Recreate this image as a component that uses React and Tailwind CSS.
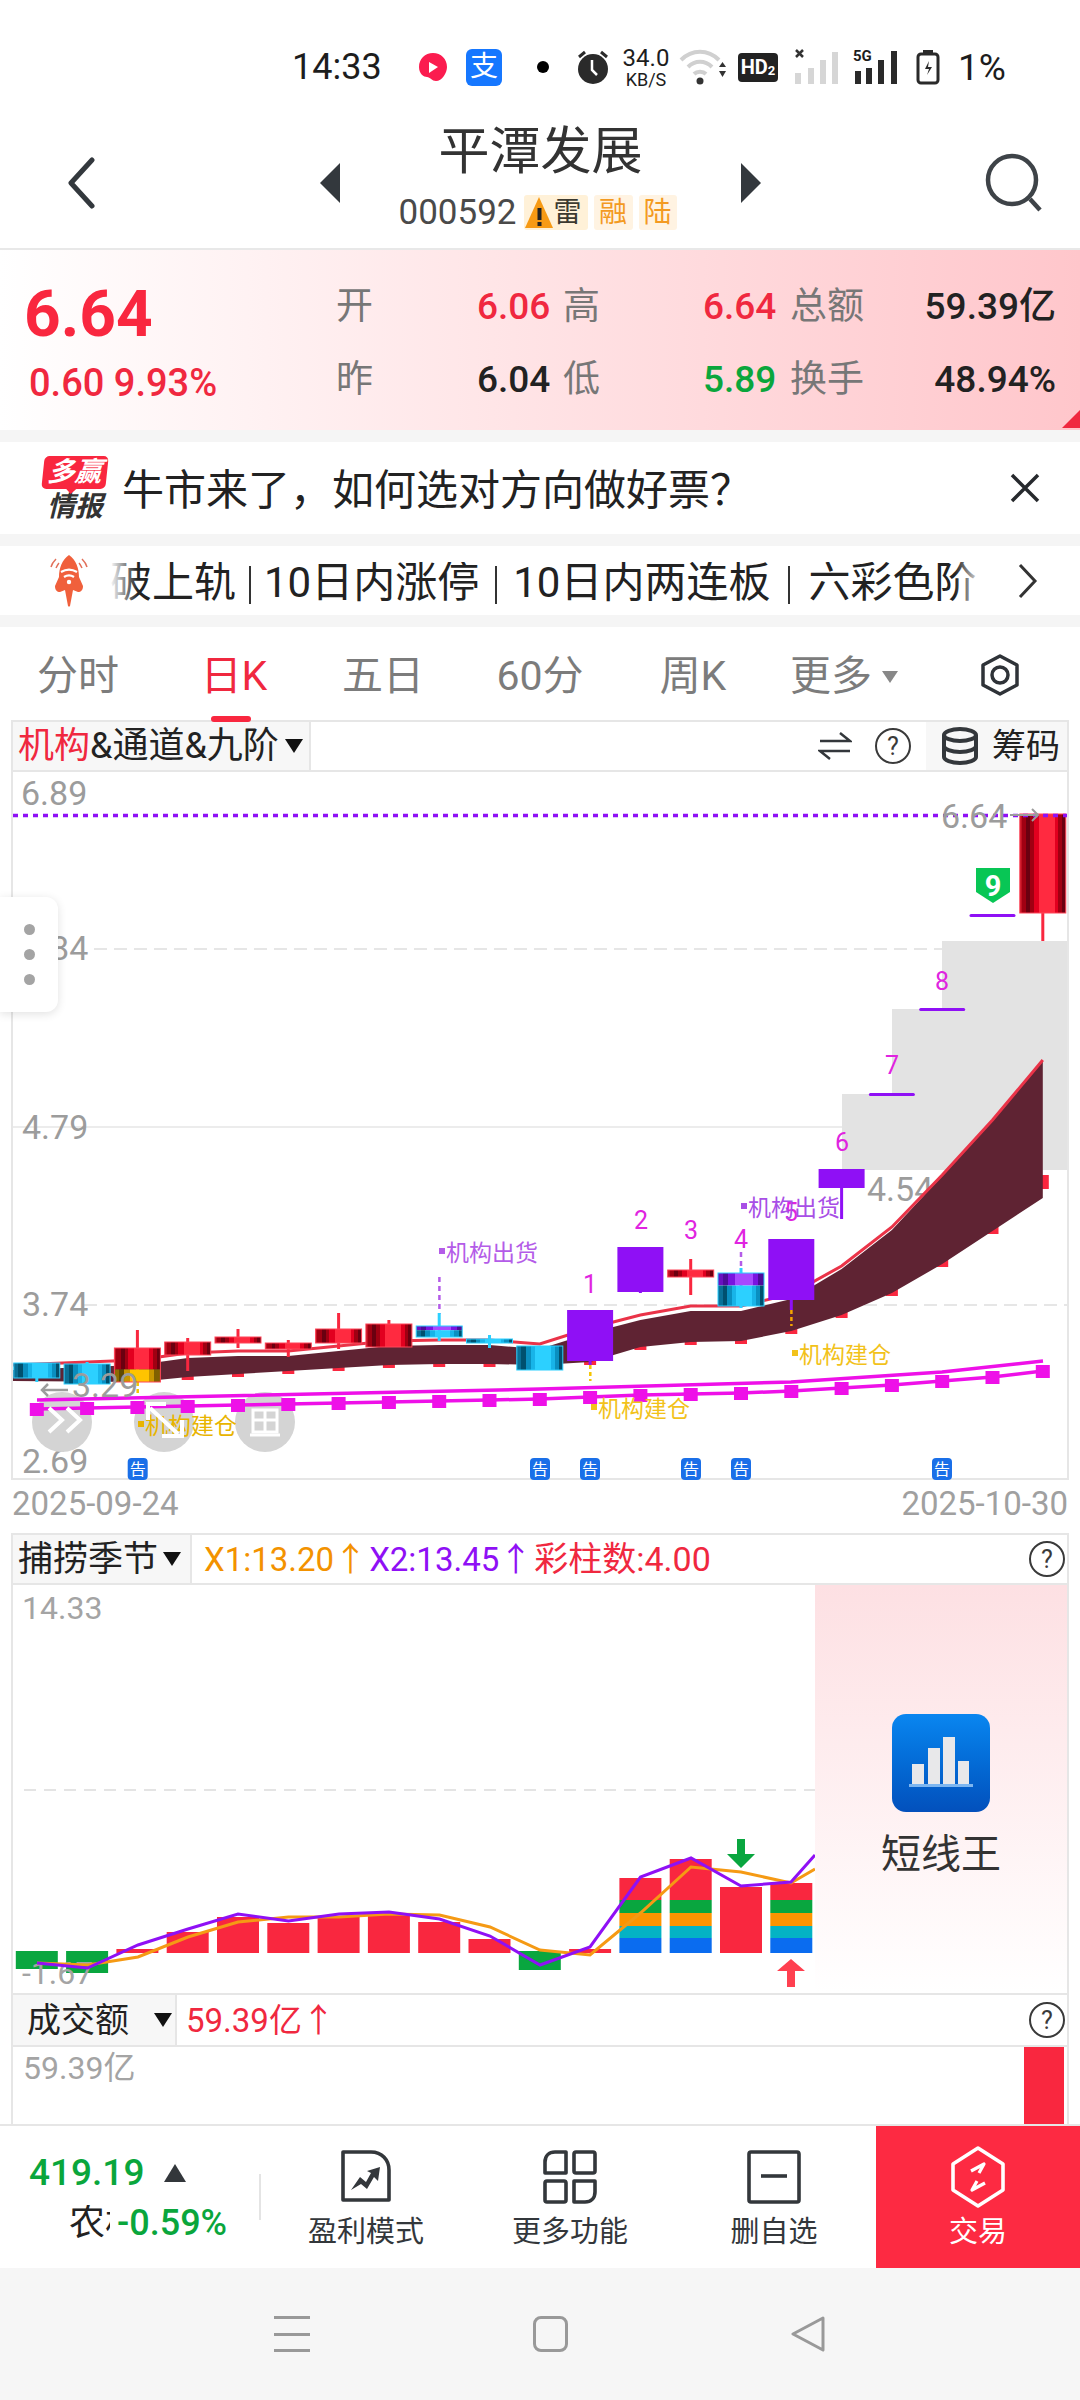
import React from 'react';

const RED = '#f9273f';
const PURPLE = '#8f10f5';
const MAGENTA = '#ee10e8';

const cx = (i) => 36.8 + 50.3 * i;

// [i, top, bottom, wickTop, wickBottom, kind]
const candles = [
  [0, 1363, 1378, 1363, 1382, 'cyan'],
  [1, 1364, 1384, 1362, 1384, 'cyan'],
  [2, 1348, 1382, 1330, 1382, 'redYellow'],
  [3, 1342, 1355, 1338, 1371, 'red'],
  [4, 1337, 1343, 1329, 1348, 'red'],
  [5, 1343, 1349, 1340, 1357, 'red'],
  [6, 1329, 1343, 1313, 1349, 'red'],
  [7, 1324, 1347, 1320, 1347, 'red'],
  [8, 1326, 1337, 1313, 1341, 'cyanPurple'],
  [9, 1339, 1343, 1335, 1348, 'cyan'],
  [10, 1346, 1370, 1346, 1370, 'cyan'],
  [11, 1310, 1361, 1310, 1365, 'purple'],
  [12, 1247, 1292, 1247, 1293, 'purple'],
  [13, 1270, 1277, 1259, 1295, 'red'],
  [14, 1273, 1306, 1268, 1308, 'cyanPurple'],
  [15, 1239, 1300, 1239, 1310, 'purple'],
  [16, 1169, 1188, 1169, 1219, 'purple'],
  [20, 814, 913, 814, 941, 'red'],
];

const bandTop = [[12, 1370], [cx(2), 1365], [cx(3), 1358], [cx(4), 1356], [cx(5), 1356], [cx(6), 1351], [cx(7), 1346], [cx(8), 1345], [cx(9), 1345], [cx(10), 1349], [cx(11), 1333], [cx(12), 1320], [cx(13), 1311], [cx(14), 1311], [cx(15), 1299], [cx(16), 1269], [cx(17), 1230], [cx(18), 1176], [cx(19), 1121], [cx(20), 1061]];
const bandBottom = [[12, 1381], [cx(2), 1382], [cx(3), 1377], [cx(4), 1374], [cx(5), 1371], [cx(6), 1368], [cx(7), 1365], [cx(8), 1364], [cx(9), 1364], [cx(10), 1365], [cx(11), 1362], [cx(12), 1347], [cx(13), 1342], [cx(14), 1341], [cx(15), 1331], [cx(16), 1315], [cx(17), 1293], [cx(18), 1264], [cx(19), 1231], [cx(20), 1198]];
const squares = [1409, 1408, 1407, 1406, 1405, 1404, 1403, 1402, 1401, 1400, 1399, 1397, 1395, 1394, 1393, 1391, 1388, 1385, 1381, 1377, 1371];

const pts = (list, dy = 0) => list.map(([x, y]) => `${x},${y + dy}`).join(' ');
// the red edge sits off the band on the left and merges with it towards the last bars
const edge = bandTop.map(([x, y], n) => `${x},${y - (n < 15 ? 5 : n < 17 ? 3 : 1)}`).join(' ');

const stripes = {
  red: [['#c01020', 0], ['#a00012', 0.04], ['#6a0010', 0.14], ['#a00012', 0.22], ['#e2001f', 0.3], ['#ff2a40', 0.42], ['#ff2a40', 0.68], ['#e2001f', 0.76], ['#a00012', 0.84], ['#6a0010', 0.92]],
  cyan: [['#0a6f96', 0], ['#00506e', 0.1], ['#0a8fc0', 0.2], ['#18b4e8', 0.3], ['#2cd0ff', 0.4], ['#2cd0ff', 0.66], ['#18b4e8', 0.74], ['#0a8fc0', 0.82], ['#00506e', 0.92]],
  yellow: [['#8c6a00', 0], ['#5f4a00', 0.1], ['#c89600', 0.2], ['#ffc400', 0.34], ['#ffc400', 0.68], ['#c89600', 0.76], ['#806000', 0.86]],
  violet: [['#6a10c0', 0], ['#4e0a9a', 0.1], ['#7a14e0', 0.22], ['#a848ff', 0.36], ['#a848ff', 0.66], ['#7a14e0', 0.76], ['#4e0a9a', 0.88]],
};

const Stripe = ({ id, stops }) => (
  <linearGradient id={id} x1="0" x2="1" y1="0" y2="0">
    {stops.map(([c, o], n) => {
      const next = stops[n + 1] ? stops[n + 1][1] : 1;
      return (
        <React.Fragment key={n}>
          <stop offset={o} stopColor={c} />
          <stop offset={next} stopColor={c} />
        </React.Fragment>
      );
    })}
  </linearGradient>
);

const Candle = ({ c }) => {
  const [i, top, bot, hi, lo, kind] = c;
  const x = cx(i);
  const left = x - 23;
  const w = 46;
  const h = bot - top;
  const wick = kind === 'red' || kind === 'redYellow' ? RED : kind === 'purple' ? PURPLE : '#2cd0ff';
  return (
    <g>
      <rect x={x - 1.5} y={hi} width="3" height={lo - hi} fill={wick} />
      {kind === 'purple' && <rect x={left} y={top} width={w} height={h} fill={PURPLE} />}
      {kind === 'red' && <rect x={left} y={top} width={w} height={h} fill="url(#sRed)" stroke="#ff4458" strokeWidth="1" />}
      {kind === 'cyan' && <rect x={left} y={top} width={w} height={h} fill="url(#sCyan)" stroke="#2cd0ff" strokeWidth="1" />}
      {kind === 'redYellow' && (
        <>
          <rect x={left} y={top} width={w} height={h * 0.63} fill="url(#sRed)" />
          <rect x={left} y={top + h * 0.63} width={w} height={h * 0.37} fill="url(#sYellow)" />
          <rect x={left} y={top} width={w} height={h} fill="none" stroke="#ff4458" strokeWidth="1" />
        </>
      )}
      {kind === 'cyanPurple' && (
        <>
          <rect x={left} y={top} width={w} height={h * 0.38} fill="url(#sViolet)" />
          <rect x={left} y={top + h * 0.38} width={w} height={h * 0.62} fill="url(#sCyan)" />
          <rect x={left} y={top} width={w} height={h} fill="none" stroke="#2cd0ff" strokeWidth="1" />
        </>
      )}
    </g>
  );
};

const Tag = ({ x, y, color, children }) => (
  <g>
    <rect x={x} y={y - 13} width="6" height="6" fill={color} />
    <text x={x + 7} y={y} fontSize="23" fill={color}>{children}</text>
  </g>
);

const Gao = ({ x }) => (
  <g>
    <rect x={x - 10} y="1458" width="20" height="22" rx="4" fill="#1a6fe8" />
    <text x={x} y="1475" fontSize="16" fill="#fff" textAnchor="middle">告</text>
  </g>
);

const MainChart = () => (
  <svg width="1054" height="708" viewBox="13 772 1054 708" className="block">
    <defs>
      <Stripe id="sRed" stops={stripes.red} />
      <Stripe id="sCyan" stops={stripes.cyan} />
      <Stripe id="sYellow" stops={stripes.yellow} />
      <Stripe id="sViolet" stops={stripes.violet} />
    </defs>

    {/* step boxes */}
    <rect x="842" y="1094" width="226" height="76" fill="#e3e3e3" />
    <rect x="892" y="1009" width="176" height="85" fill="#e3e3e3" />
    <rect x="942" y="941" width="126" height="68" fill="#e3e3e3" />

    {/* grid */}
    <line x1="94" x2="942" y1="949" y2="949" stroke="#e6e6e6" strokeWidth="2" strokeDasharray="13 7" />
    <line x1="13" x2="842" y1="1127" y2="1127" stroke="#ececec" strokeWidth="2" />
    <line x1="84" x2="1067" y1="1305" y2="1305" stroke="#e6e6e6" strokeWidth="2" strokeDasharray="13 7" />

    <g fontSize="34" fill="#9c9c9c">
      <text x="21" y="805">6.89</text>
      <text x="22" y="960">5.84</text>
      <text x="22" y="1139">4.79</text>
      <text x="22" y="1316">3.74</text>
      <text x="22" y="1473">2.69</text>
      <text x="867" y="1201">4.54</text>
    </g>

    {/* floating buttons */}
    <circle cx="62" cy="1422" r="30" fill="#d4d4d4" />
    <circle cx="164" cy="1422" r="30" fill="#d4d4d4" />
    <circle cx="265" cy="1422" r="30" fill="#d4d4d4" />

    {/* MA squares under band */}
    {bandBottom.slice(2).map(([x, y], n) => (
      <rect key={n} x={x - 6} y={n === 17 ? 1175 : y - 11} width="12" height="14" fill={RED} />
    ))}

    <polygon points={pts(bandTop) + ' ' + pts([...bandBottom].reverse())} fill="#5f2333" />
    <polyline points={pts(bandTop.slice(0, 17), -2)} fill="none" stroke="#fff" strokeWidth="1.5" />
    <polyline points={edge} fill="none" stroke="#ea3348" strokeWidth="3" />

    {/* magenta averages */}
    <polyline points="37,1400 540,1389 791,1382 942,1372 1043,1361" fill="none" stroke={MAGENTA} strokeWidth="3.5" />
    <polyline points={squares.map((y, i) => `${cx(i)},${y}`).join(' ')} fill="none" stroke={MAGENTA} strokeWidth="3.5" />
    {squares.map((y, i) => (
      <rect key={i} x={cx(i) - 7} y={y - 6} width="14" height="13" fill={MAGENTA} />
    ))}

    {/* dashed stems */}
    <line x1="439.4" x2="439.4" y1="1277" y2="1314" stroke="#b45ce8" strokeWidth="2.5" strokeDasharray="5 4" />
    <line x1="741" x2="741" y1="1252" y2="1268" stroke="#b45ce8" strokeWidth="2.5" strokeDasharray="5 4" />
    <line x1="137.7" x2="137.7" y1="1382" y2="1396" stroke="#f5c400" strokeWidth="2.5" strokeDasharray="4 3" />
    <line x1="590.3" x2="590.3" y1="1365" y2="1381" stroke="#f5c400" strokeWidth="2.5" strokeDasharray="4 3" />
    <line x1="791.4" x2="791.4" y1="1310" y2="1326" stroke="#f5a400" strokeWidth="2.5" strokeDasharray="4 3" />

    {candles.map((c) => <Candle key={c[0]} c={c} />)}
    {[17, 18, 19].map((i, n) => (
      <rect key={i} x={cx(i) - 23} y={[1093, 1008, 914][n]} width="46" height="3" rx="1.5" fill={PURPLE} />
    ))}

    {/* sequence numbers */}
    <g fontSize="25" fill="#e024e0" textAnchor="middle">
      <text x="590" y="1293">1</text>
      <text x="641" y="1229">2</text>
      <text x="691" y="1239">3</text>
      <text x="741" y="1248">4</text>
      <text x="791" y="1221">5</text>
      <text x="842" y="1151">6</text>
      <text x="892" y="1074">7</text>
      <text x="942" y="990">8</text>
    </g>

    {/* green 9 flag */}
    <polygon points="976,868 1010,868 1010,892 993,903 976,892" fill="#08c655" />
    <text x="993" y="896" fontSize="29" fontWeight="700" fill="#fff" textAnchor="middle">9</text>

    <Tag x={439} y={1261} color="#b45ce8">机构出货</Tag>
    <Tag x={741} y={1216} color="#a84fe6">机构出货</Tag>
    <Tag x={138} y={1434} color="#e8b400">机构建仓</Tag>
    <Tag x={591} y={1417} color="#f2c21a">机构建仓</Tag>
    <Tag x={792} y={1363} color="#f2c21a">机构建仓</Tag>

    {/* float icons */}
    <polyline points="49,1408 62,1420 49,1432" fill="none" stroke="#fff" strokeWidth="4" />
    <polyline points="67,1408 80,1420 67,1432" fill="none" stroke="#fff" strokeWidth="4" />
    <g fill="none" stroke="#fff" strokeWidth="4">
      <line x1="150" y1="1408" x2="178" y2="1434" />
      <polyline points="148,1420 148,1404 166,1404" />
      <polyline points="162,1436 182,1436 182,1420" />
    </g>
    <g fill="none" stroke="#fff" strokeWidth="3">
      <rect x="253" y="1410" width="24" height="22" />
      <line x1="265" y1="1410" x2="265" y2="1432" />
      <line x1="253" y1="1420" x2="277" y2="1420" />
      <line x1="250" y1="1435" x2="280" y2="1435" />
    </g>

    {/* current price dashed */}
    <line x1="13" x2="1067" y1="815.5" y2="815.5" stroke={PURPLE} strokeWidth="3.5" strokeDasharray="5 5" />
    <g fontSize="34" fill="#9c9c9c">
      <text x="941" y="828">6.64</text>
      <text x="72" y="1397">3.29</text>
    </g>
    <polyline points="1010,815 1038,815" fill="none" stroke="#9c9c9c" strokeWidth="2" />
    <polyline points="1032,809 1038,815 1032,821" fill="none" stroke="#9c9c9c" strokeWidth="2" />
    <polyline points="68,1390 42,1390" fill="none" stroke="#9c9c9c" strokeWidth="2.5" />
    <polyline points="48,1384 42,1390 48,1396" fill="none" stroke="#9c9c9c" strokeWidth="2.5" />

    {[137.7, 540, 590, 691, 741, 942].map((x) => <Gao key={x} x={x} />)}
  </svg>
);

// [x, top, bottom]
const redBars = [[2, 1949, 1953], [3, 1932, 1953], [4, 1917, 1953], [5, 1923, 1953], [6, 1917, 1953], [7, 1913, 1953], [8, 1922, 1953], [9, 1939, 1953], [11, 1949, 1953], [14, 1887, 1953]];
const greenBars = [[0, 1951, 1969], [1, 1951, 1973], [10, 1951, 1970]];
const stacked = [[12, 1878], [13, 1859], [15, 1883]];

const SubChart = () => (
  <svg width="802" height="408" viewBox="13 1585 802 408" className="block shrink-0">
    <text x="22" y="1619" fontSize="32" fill="#a4a4a4">14.33</text>
    <line x1="24" x2="815" y1="1790" y2="1790" stroke="#e4e4e4" strokeWidth="2" strokeDasharray="12 8" />
    {redBars.map(([i, t, b]) => <rect key={i} x={cx(i) - 21} y={t} width="42" height={b - t} fill={RED} />)}
    {greenBars.map(([i, t, b]) => <rect key={i} x={cx(i) - 21} y={t} width="42" height={b - t} fill="#09a63f" />)}
    {stacked.map(([i, t]) => (
      <g key={i}>
        <rect x={cx(i) - 21} y={t} width="42" height={1900 - t} fill={RED} />
        <rect x={cx(i) - 21} y="1900" width="42" height="13" fill="#09a63f" />
        <rect x={cx(i) - 21} y="1913" width="42" height="13" fill="#fd9400" />
        <rect x={cx(i) - 21} y="1926" width="42" height="12" fill="#04b3c4" />
        <rect x={cx(i) - 21} y="1938" width="42" height="15" fill="#0a6cf0" />
      </g>
    ))}
    <text x="22" y="1984" fontSize="32" fill="#a4a4a4">-1.67</text>
    <polyline points="37,1963 87.5,1965 138,1957 188,1937 238,1922 288.5,1917 339,1917 389,1914 439.5,1915 490,1927 540,1950 590,1955 640.5,1913 691,1867 741,1872 791,1883 815,1869" fill="none" stroke="#f59a14" strokeWidth="3" />
    <polyline points="37,1963 87.5,1968 138,1945 188,1929 238,1914 288.5,1921 339,1914 389,1912 439.5,1919 490,1936 540,1965 590,1947 640.5,1877 691,1858 741,1886 791,1882 815,1855" fill="none" stroke={PURPLE} strokeWidth="3" />
    <polygon points="737,1839 745,1839 745,1854 755,1854 741,1868 727,1854 737,1854" fill="#09a63f" />
    <polygon points="787,1987 795,1987 795,1971 805,1971 791,1959 777,1971 787,1971" fill="#ff4050" />
  </svg>
);

const Help = () => (
  <svg width="38" height="38" viewBox="0 0 38 38">
    <circle cx="19" cy="19" r="17" fill="none" stroke="#3a3a3a" strokeWidth="2" />
    <text x="19" y="28" fontSize="25" fill="#3a3a3a" textAnchor="middle">?</text>
  </svg>
);

const Caret = ({ className = '' }) => (
  <svg width="20" height="16" viewBox="0 0 20 16" className={className}>
    <polygon points="1,1 19,1 10,15" fill="#111" />
  </svg>
);

const StatusBar = () => (
  <div className="h-[100px] flex items-center pl-[292px] pt-[34px] text-[#1d1d1d]">
    <span className="w-[126px] text-[36px] leading-none">14:33</span>
    <svg width="30" height="30" viewBox="0 0 30 30" className="mr-[18px]">
      <path d="M15 1C7 1 1 7 1 15c0 7 5 10 8 10 3 0 5 4 9 4 6 0 11-8 11-14C29 7 23 1 15 1z" fill="#fb1c4f" />
      <path d="M11 10l9 5-9 6z" fill="#fff" />
    </svg>
    <div className="w-[36px] h-[37px] mr-[35px] rounded-[6px] bg-[#1677ff] flex items-center justify-center text-white text-[28px] leading-none">支</div>
    <div className="w-[12px] h-[12px] mr-[27px] rounded-full bg-black" />
    <svg width="34" height="36" viewBox="0 0 34 36" className="mr-[9px]">
      <circle cx="17" cy="20" r="15" fill="#2a2a2a" />
      <path d="M3 8l6-5M31 8l-6-5" stroke="#2a2a2a" strokeWidth="3" />
      <path d="M16 11v10l5 5" stroke="#fff" strokeWidth="2.5" fill="none" />
    </svg>
    <div className="w-[54px] mr-[6px] flex flex-col items-center leading-none">
      <span className="text-[24px]">34.0</span>
      <span className="text-[18px] mt-[1px]">KB/S</span>
    </div>
    <svg width="48" height="36" viewBox="0 0 48 36" className="mr-[11px]">
      <g fill="none" stroke="#d0d0d0" strokeWidth="4">
        <path d="M2 11c11-11 27-11 38 0" />
        <path d="M9 18c7-7 17-7 24 0" />
        <path d="M15 25c3-3 9-3 12 0" />
      </g>
      <circle cx="21" cy="32" r="3.5" fill="#333" />
      <polygon points="40,18 47,18 43.5,13" fill="#333" />
      <polygon points="40,22 47,22 43.5,28" fill="#333" />
    </svg>
    <div className="w-[40px] h-[29px] mr-[15px] rounded-[4px] bg-[#222] text-white font-bold text-[20px] leading-none flex items-center justify-center">HD<span className="text-[13px] mt-[6px]">2</span></div>
    <svg width="46" height="36" viewBox="0 0 46 36" className="mr-[14px]">
      <path d="M3 1l7 7M10 1l-7 7" stroke="#333" strokeWidth="2.5" />
      <g fill="#d6d6d6">
        <rect x="2" y="24" width="6" height="11" />
        <rect x="15" y="19" width="6" height="16" />
        <rect x="27" y="11" width="6" height="24" />
        <rect x="39" y="3" width="6" height="32" />
      </g>
    </svg>
    <div className="relative w-[46px] h-[36px] mr-[17px]">
      <span className="absolute left-0 top-0 font-bold text-[15px] leading-none">5G</span>
      <svg width="46" height="36" viewBox="0 0 46 36">
        <g fill="#2a2a2a">
          <rect x="2" y="22" width="6" height="13" />
          <rect x="13" y="19" width="6" height="16" />
          <rect x="25" y="11" width="6" height="24" />
          <rect x="38" y="2" width="6" height="33" />
        </g>
      </svg>
    </div>
    <svg width="24" height="36" viewBox="0 0 24 36" className="mr-[18px]">
      <rect x="7" y="1" width="10" height="4" fill="#2a2a2a" />
      <rect x="2" y="5" width="20" height="29" rx="3" fill="none" stroke="#2a2a2a" strokeWidth="3" />
      <path d="M13 12l-4 8h4l-2 6 5-8h-4z" fill="#2a2a2a" />
    </svg>
    <span className="text-[37px] leading-none">1%</span>
  </div>
);

const TitleBar = () => (
  <div className="h-[150px] border-b-2 border-[#e8e8e8] flex items-start">
    <svg width="30" height="52" viewBox="0 0 30 52" className="ml-[66px] mt-[57px] shrink-0">
      <polyline points="26,3 5,26 26,49" fill="none" stroke="#33383d" strokeWidth="5" strokeLinecap="round" strokeLinejoin="round" />
    </svg>
    <svg width="20" height="40" viewBox="0 0 20 40" className="ml-[224px] mt-[63px] shrink-0">
      <polygon points="20,0 20,40 0,20" fill="#33383d" />
    </svg>
    <div className="w-[401px] shrink-0 flex flex-col items-center">
      <div className="text-[51px] leading-none mt-[26px] text-[#333]">平潭发展</div>
      <div className="mt-[18px] mr-[6px] flex items-center gap-[6px]">
        <span className="text-[35px] leading-none text-[#4a4a4a] mr-[1px]">000592</span>
        <span className="h-[35px] w-[64px] bg-[#fff1d8] rounded-[3px] flex items-center justify-end pr-[6px] relative text-[28px] leading-none text-[#3c3a30]">
          <svg width="30" height="34" viewBox="0 0 30 34" className="absolute left-0 top-0">
            <polygon points="15,2 29,33 1,33" fill="#f79a14" />
            <rect x="13.5" y="13" width="4" height="12" fill="#222" />
            <rect x="13.5" y="27" width="4" height="4" fill="#222" />
          </svg>
          雷
        </span>
        <span className="h-[35px] w-[39px] bg-[#fff3e2] rounded-[3px] flex items-center justify-center text-[28px] leading-none text-[#f39a22]">融</span>
        <span className="h-[35px] w-[38px] bg-[#fff3e2] rounded-[3px] flex items-center justify-center text-[28px] leading-none text-[#f39a22]">陆</span>
      </div>
    </div>
    <svg width="20" height="40" viewBox="0 0 20 40" className="mt-[63px] shrink-0">
      <polygon points="0,0 0,40 20,20" fill="#33383d" />
    </svg>
    <svg width="60" height="60" viewBox="0 0 60 60" className="ml-[223px] mt-[53px] shrink-0">
      <circle cx="28" cy="27" r="24" fill="none" stroke="#3e4348" strokeWidth="4.5" />
      <line x1="46" y1="46" x2="56" y2="57" stroke="#3e4348" strokeWidth="4.5" />
    </svg>
  </div>
);

const Quote = () => (
  <div className="relative h-[180px] flex bg-linear-to-r from-white to-[#ffc6cb]">
    <div className="w-[336px] shrink-0 pl-[24px]">
      <div className="mt-[24px] text-[64px] leading-[82px] font-bold text-[#f9273f]">6.64</div>
      <div className="mt-[8px] pl-[5px] text-[38px] leading-none font-medium text-[#f0283f]">0.60 9.93%</div>
    </div>
    <div className="mt-[38px] h-[108px] grid grid-cols-[141px_86px_140px_87px_110px_156px] grid-rows-[36px_36px] gap-y-[37px] items-center text-[37px] leading-none">
      <span className="text-[#777]">开</span>
      <span className="text-[#f0283f] font-medium">6.06</span>
      <span className="text-[#777]">高</span>
      <span className="text-[#f0283f] font-medium">6.64</span>
      <span className="text-[#777]">总额</span>
      <span className="text-right text-[#222] font-medium">59.39亿</span>
      <span className="text-[#777]">昨</span>
      <span className="text-[#222] font-medium">6.04</span>
      <span className="text-[#777]">低</span>
      <span className="text-[#0aa63c] font-medium">5.89</span>
      <span className="text-[#777]">换手</span>
      <span className="text-right text-[#222] font-medium">48.94%</span>
    </div>
    <div className="absolute right-0 bottom-[2px] w-0 h-0 border-l-[18px] border-l-transparent border-b-[18px] border-b-[#f0283f]" />
  </div>
);

const Banner = () => (
  <div className="h-[92px] flex items-center bg-white">
    <div className="ml-[42px] w-[66px] shrink-0 flex flex-col items-center">
      <div className="relative w-[64px] h-[33px] bg-[#f9273f] rounded-[5px] -skew-x-6 flex items-center justify-center text-white font-bold italic text-[27px] leading-none">
        多赢
        <div className="absolute -bottom-[5px] left-[24px] w-0 h-0 border-x-[6px] border-x-transparent border-t-[6px] border-t-[#f9273f]" />
      </div>
      <div className="mt-[4px] font-bold italic text-[28px] leading-none text-[#333]">情报</div>
    </div>
    <div className="ml-[14px] mt-[5px] text-[42px] leading-none text-[#222]">牛市来了，如何选对方向做好票？</div>
    <svg width="34" height="34" viewBox="0 0 34 34" className="ml-auto mr-[38px]">
      <path d="M4 4l26 26M30 4L4 30" stroke="#26292d" strokeWidth="3.5" />
    </svg>
  </div>
);

const Bar = ({ className = 'mx-[16px]' }) => <span className={`inline-block align-middle w-[2px] h-[38px] bg-[#333] ${className}`} />;

const Marquee = () => (
  <div className="h-[69px] flex items-center bg-white">
    <svg width="42" height="52" viewBox="0 0 42 52" className="ml-[48px] shrink-0">
      <path d="M3 12C4 8 6 6 8 4M8 13c1-2 2-4 3-5M39 12c-1-4-3-6-5-8M34 13c-1-2-2-4-3-5" fill="none" stroke="#e2705a" strokeWidth="1.5" />
      <path d="M21 0c7 5 10 13 10 22l4 9c0 4-2 6-5 6l-5-2-3 16c-1 1-1 1-2 0l-3-16-5 2c-3 0-5-2-5-6l4-9c0-9 3-17 10-22z" fill="#f0603c" />
      <path d="M13 17c5-3 11-3 16 0M16 22c3-2 7-2 10 0" fill="none" stroke="#fff" strokeWidth="2.2" />
      <circle cx="21" cy="27" r="2.2" fill="#fff" />
    </svg>
    <div className="relative ml-[20px] mt-[5px] w-[873px] overflow-hidden whitespace-nowrap text-[42px] leading-none text-[#222]">
      破上轨<Bar className="ml-[13px] mr-[13px]" />10日内涨停<Bar />10日内两连板<Bar className="mx-[18px]" />六彩色阶
      <div className="absolute inset-y-0 left-0 w-[28px] bg-linear-to-r from-white to-transparent" />
      <div className="absolute inset-y-0 right-0 w-[28px] bg-linear-to-l from-white to-transparent" />
    </div>
    <svg width="22" height="36" viewBox="0 0 22 36" className="ml-[34px] shrink-0">
      <polyline points="3,2 18,18 3,34" fill="none" stroke="#333" strokeWidth="3" />
    </svg>
  </div>
);

const Tabs = () => (
  <div className="h-[93px] flex items-start text-[41px] leading-none text-[#7c7c7c] pt-[29px]">
    <div className="w-[156px] text-center">分时</div>
    <div className="w-[156px] text-center text-[#f0283f] relative">
      日K
      <div className="absolute left-[55px] top-[60px] w-[40px] h-[6px] rounded-full bg-[#f9273f]" />
    </div>
    <div className="w-[142px] text-center">五日</div>
    <div className="w-[172px] text-center">60分</div>
    <div className="w-[134px] text-center">周K</div>
    <div className="w-[168px] flex justify-center items-center gap-[10px]">
      更多
      <svg width="16" height="12" viewBox="0 0 16 12"><polygon points="0,0 16,0 8,12" fill="#888" /></svg>
    </div>
    <div className="w-[144px] flex justify-center -mt-[2px]">
      <svg width="38" height="42" viewBox="0 0 38 42">
        <polygon points="19,2 36,11 36,31 19,40 2,31 2,11" fill="none" stroke="#2f3338" strokeWidth="3.5" strokeLinejoin="round" />
        <circle cx="19" cy="21" r="8" fill="none" stroke="#2f3338" strokeWidth="3.5" />
      </svg>
    </div>
  </div>
);

const PanelHead = ({ h = 'h-[52px]', children }) => (
  <div className={`${h} mx-[11px] border-2 border-[#e6e6e6] flex items-center text-[#222]`}>{children}</div>
);

const Nav = ({ label, children, active }) => (
  <div className={`w-[204px] h-full flex flex-col items-center pt-[20px] ${active ? 'bg-[#fd2a42] text-white' : 'text-[#33373b]'}`}>
    <div className="h-[62px] flex items-center">{children}</div>
    <div className="mt-[10px] text-[29px] leading-none">{label}</div>
  </div>
);

const BottomBar = () => (
  <div className="h-[144px] border-t-2 border-[#e6e6e6] flex bg-white">
    <div className="w-[264px] shrink-0 relative">
      <div className="flex items-center pl-[29px] pt-[28px]">
        <span className="text-[37px] leading-none text-[#0aa63c] font-medium w-[135px]">419.19</span>
        <svg width="22" height="18" viewBox="0 0 22 18"><polygon points="11,0 22,18 0,18" fill="#33373b" /></svg>
      </div>
      <div className="flex items-center mt-[14px] pl-[69px]">
        <div className="w-[41px] mr-[7px] overflow-hidden text-[36px] leading-none text-[#222] whitespace-nowrap">农林</div>
        <span className="text-[36px] leading-none text-[#0aa63c] font-medium">-0.59%</span>
      </div>
      <div className="absolute right-[3px] top-[48px] w-[2px] h-[46px] bg-[#e4e4e4]" />
    </div>
    <div className="flex">
      <Nav label="盈利模式">
        <svg width="54" height="54" viewBox="0 0 54 54">
          <path d="M4 2h28c11 0 18 8 18 18v30H4z" fill="none" stroke="#33373b" strokeWidth="3.6" strokeLinejoin="round" />
          <path d="M12 40l9-13 6 5 5-9-4-2 13-4-2 14-4-4-7 12-6-5z" fill="#33373b" />
        </svg>
      </Nav>
      <Nav label="更多功能">
        <svg width="54" height="54" viewBox="0 0 54 54" fill="none" stroke="#33373b" strokeWidth="3.6" strokeLinejoin="round">
          <path d="M12 2h11v21H2V12C2 6 6 2 12 2z" />
          <rect x="31" y="2" width="21" height="21" rx="2" />
          <rect x="2" y="31" width="21" height="21" rx="2" />
          <path d="M31 31h21v11c0 6-4 10-10 10H31z" />
        </svg>
      </Nav>
      <Nav label="删自选">
        <svg width="54" height="54" viewBox="0 0 54 54" fill="none" stroke="#33373b" strokeWidth="3.6">
          <rect x="2" y="2" width="50" height="50" rx="2" />
          <line x1="14" y1="26" x2="40" y2="26" />
        </svg>
      </Nav>
      <Nav label="交易" active>
        <svg width="54" height="62" viewBox="0 0 54 62" fill="none" stroke="#fff" strokeWidth="3.6" strokeLinejoin="round">
          <polygon points="27,2 52,18 52,44 27,60 2,44 2,18" />
          <path d="M20 25l13-7-5 9M34 37l-13 7 5-9" strokeWidth="3.2" />
        </svg>
      </Nav>
    </div>
  </div>
);

const SystemNav = () => (
  <div className="h-[132px] bg-[#f6f6f6] flex items-start pt-[48px]">
    <div className="ml-[274px] w-[36px] h-[36px] flex flex-col justify-between">
      <div className="h-[3px] bg-[#999]" />
      <div className="h-[3px] bg-[#999]" />
      <div className="h-[3px] bg-[#999]" />
    </div>
    <div className="ml-[223px] w-[35px] h-[36px] rounded-[8px] border-[3px] border-[#999]" />
    <svg width="36" height="36" viewBox="0 0 36 36" className="ml-[222px]">
      <path d="M33 2L3 18l30 16z" fill="none" stroke="#999" strokeWidth="3" strokeLinejoin="round" />
    </svg>
  </div>
);

const App = () => (
  <div className="w-[1080px] h-[2400px] overflow-hidden bg-white font-['Roboto','Noto_Sans_CJK_SC',sans-serif]">
    <StatusBar />
    <TitleBar />
    <Quote />
    <div className="h-[12px] bg-[#f5f5f5]" />
    <Banner />
    <div className="h-[12px] bg-[#f5f5f5]" />
    <Marquee />
    <div className="h-[12px] bg-[#f5f5f5]" />
    <Tabs />

    <PanelHead>
      <div className="w-[298px] h-full bg-[#f7f7f7] border-r-2 border-[#e6e6e6] flex items-center pl-[5px] text-[36px] leading-none whitespace-nowrap">
        <span className="text-[#f0283f]">机构</span>&amp;通道&amp;九阶
        <Caret className="ml-[5px]" />
      </div>
      <svg width="34" height="32" viewBox="0 0 34 32" className="ml-[507px] shrink-0" fill="none" stroke="#33373b" strokeWidth="2.5">
        <path d="M2 11h30L22 3M32 21H2l10 8" />
      </svg>
      <div className="ml-[22px] shrink-0 flex"><Help /></div>
      <div className="ml-[14px] h-full flex-1 bg-[#f7f7f7] flex items-center pl-[15px] gap-[13px] text-[34px] leading-none whitespace-nowrap">
        <svg width="38" height="38" viewBox="0 0 38 38" fill="none" stroke="#33373b" strokeWidth="4" className="shrink-0">
          <ellipse cx="19" cy="8" rx="16" ry="6" />
          <path d="M3 8v22c0 3 7 6 16 6s16-3 16-6V8M3 19c0 3 7 6 16 6s16-3 16-6" />
        </svg>
        筹码
      </div>
    </PanelHead>

    <div className="relative h-[708px] mx-[11px] border-x-2 border-b-2 border-[#e6e6e6]">
      <MainChart />
      <div className="absolute -left-[13px] top-[125px] w-[58px] h-[115px] bg-white rounded-r-[12px] shadow-[0_2px_10px_rgba(0,0,0,0.12)] flex flex-col items-center justify-center gap-[14px]">
        <div className="w-[11px] h-[11px] rounded-full bg-[#a4a4a4]" />
        <div className="w-[11px] h-[11px] rounded-full bg-[#a4a4a4]" />
        <div className="w-[11px] h-[11px] rounded-full bg-[#a4a4a4]" />
      </div>
    </div>

    <div className="h-[53px] mx-[12px] flex justify-between items-start pt-[7px] text-[33px] leading-none text-[#a0a0a0]">
      <span>2025-09-24</span>
      <span>2025-10-30</span>
    </div>

    <PanelHead>
      <div className="w-[179px] h-full bg-[#f7f7f7] border-r-2 border-[#e6e6e6] flex items-center pl-[5px] text-[35px] leading-none whitespace-nowrap">
        捕捞季节
        <Caret className="ml-[4px]" />
      </div>
      <div className="ml-[12px] flex items-center gap-[2px] text-[33px] leading-none whitespace-nowrap">
        <span className="text-[#f39200]">X1:13.20↑</span>
        <span className="text-[#8f10f5]">X2:13.45↑</span>
        <span className="text-[#f0283f] text-[34px]">彩柱数:4.00</span>
      </div>
      <div className="ml-auto mr-[1px] flex"><Help /></div>
    </PanelHead>

    <div className="h-[408px] mx-[11px] border-x-2 border-[#e6e6e6] flex">
      <SubChart />
      <div className="flex-1 bg-linear-to-b from-[#fde0e3] to-white flex flex-col items-center pt-[129px]">
        <div className="w-[98px] h-[98px] rounded-[14px] bg-linear-to-b from-[#0a86f0] to-[#0350bc] flex items-center justify-center">
          <svg width="66" height="52" viewBox="0 0 66 52">
            <g fill="#e8e8ea">
              <rect x="4" y="27" width="12" height="20" />
              <rect x="20" y="11" width="12" height="36" />
              <rect x="35" y="0" width="12" height="47" />
              <rect x="50" y="24" width="11" height="23" />
            </g>
            <rect x="1" y="47" width="64" height="3" fill="#7db6f0" />
          </svg>
        </div>
        <div className="mt-[23px] text-[40px] leading-none text-[#333]">短线王</div>
      </div>
    </div>

    <PanelHead h="h-[54px]">
      <div className="w-[164px] h-full bg-[#f7f7f7] border-r-2 border-[#e6e6e6] flex items-center pl-[14px] text-[34px] leading-none whitespace-nowrap">
        成交额
        <Caret className="ml-[24px]" />
      </div>
      <div className="ml-[9px] text-[33px] leading-none text-[#f0283f]">59.39亿↑</div>
      <div className="ml-auto mr-[1px] flex"><Help /></div>
    </PanelHead>

    <div className="relative h-[77px] mx-[11px] border-x-2 border-[#e6e6e6] pl-[10px] pt-[5px] text-[32px] leading-none text-[#a4a4a4]">
      59.39亿
      <div className="absolute right-[3px] top-0 bottom-0 w-[40px] bg-[#f9273f]" />
    </div>

    <BottomBar />
    <SystemNav />
  </div>
);

export default App;
